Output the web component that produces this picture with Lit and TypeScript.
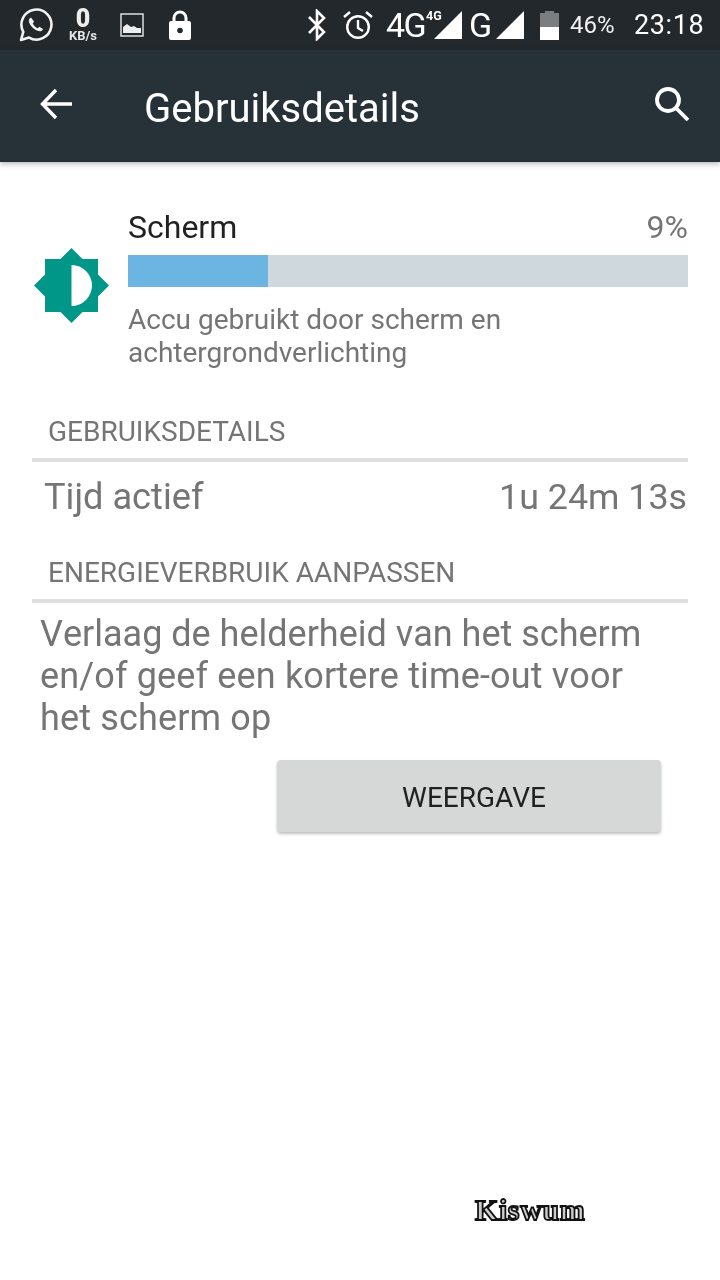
import { LitElement, html, css } from "lit";
import { customElement } from "lit/decorators.js";

@customElement("app-root")
export class AppRoot extends LitElement {
  static styles = css`
    :host { display: block; width: 720px; height: 1280px; background: #fff; font-family: Roboto, "Liberation Sans", sans-serif; overflow: hidden; position: relative; }
    svg { display: block; flex: none; }
    .gray { will-change: transform; }
    .block { display: block; }
    .status { height: 50px; background: #22282c; color: #fff; display: flex; align-items: center; padding: 0 16px 0 19px; box-sizing: border-box; }
    .kb { width: 38px; margin-left: 11px; display: flex; flex-direction: column; align-items: center; font-weight: 700; }
    .kb b { font-size: 25px; line-height: 21px; margin-top: -1px; color: #eee; }
    .kb span { font-size: 13px; line-height: 13px; color: #e6e6e6; }
    .img { margin-left: 18px; }
    .lock { margin-left: 24px; }
    .spacer { flex: 1; }
    .net { font-size: 34px; letter-spacing: -1.5px; line-height: 34px; }
    .sup { font-size: 12.5px; font-weight: 700; align-self: flex-start; margin-top: 8px; width: 18px; }
    .pct { font-size: 24px; margin-left: 11px; color: #f2f2f2; }
    .time { font-size: 27px; margin-left: 19px; letter-spacing: 0.6px; }
    .bar { height: 112px; background: #263238; color: #fff; display: flex; align-items: center; padding: 0 30px 4px 40px; box-sizing: border-box; box-shadow: 0 2px 5px rgba(0,0,0,.28); position: relative; }
    .bar h1 { font-size: 40px; font-weight: 400; margin: 10px 0 0 72px; flex: 1; line-height: 44px; }
    .content { padding: 46px 32px 0; }
    .top { display: flex; align-items: center; }
    .sun { margin: 0 19px 0 2px; position: relative; top: -3px; }
    .info { flex: 1; }
    .head { display: flex; justify-content: space-between; align-items: center; height: 38px; font-size: 32px; color: #212121; }
    .head span:last-child { font-size: 32px; color: #757575; }
    .track { height: 32px; background: #cfd8dc; margin-top: 9px; }
    .fill { height: 100%; background: #6cb5e3; }
    .sub { font-size: 28px; line-height: 33px; color: #757575; margin-top: 16px; }
    .section { font-size: 28px; line-height: 32px; color: #757575; padding: 1px 0 10px 16px; border-bottom: 4px solid #dfdfdf; }
    .s1 { margin-top: 46px; }
    .s2 { margin-top: 37px; }
    .row { display: flex; justify-content: space-between; padding: 0 1px 0 12px; font-size: 36.2px; line-height: 44px; color: #757575; margin-top: 13px; }
    .row span:last-child { font-size: 35.8px; }
    .text { font-size: 36px; line-height: 42px; color: #757575; padding-left: 8px; margin-top: 10px; font-kerning: none; }
    .wide { letter-spacing: 0.15px; }
    .actions { display: flex; justify-content: flex-end; padding-right: 27px; margin-top: 21px; }
    button { all: unset; box-sizing: border-box; width: 384px; height: 72px; background: #d6d7d7; border-radius: 4px; box-shadow: 0 2px 3px rgba(0,0,0,.25); text-align: center; font-size: 28px; line-height: 76px; color: #212121; font-family: inherit; padding-left: 10px; }
    .mark { position: absolute; left: 475px; top: 1194px; font: 700 30px/32px "Liberation Serif", serif; color: #ccc; -webkit-text-stroke: 1.8px #111; letter-spacing: 0.6px; }
  `;

  render() {
    return html`
      <div class="status">
        <svg width="34" height="34" viewBox="0 0 34 34" fill="none">
          <path d="M2 32l2.3-8.2A15 15 0 1 1 10 29.6z" stroke="#f2f2f2" stroke-width="2.6" stroke-linejoin="round"/>
          <path d="M12 9.5c-1.6.7-2.6 2.4-2 4.6 1.2 4 5.4 8 9.5 9 2.2.5 3.8-.5 4.5-2.2l-3.6-2.2-1.7 1.6c-2-.7-4.300-3-5-5l1.500-1.600z" fill="#f2f2f2"/>
        </svg>
        <div class="kb gray"><b>0</b><span>KB/s</span></div>
        <svg class="img" width="24" height="24" viewBox="0 0 24 24">
          <rect x="1" y="1" width="22" height="22" fill="none" stroke="#ddd" stroke-width="1.500"/>
          <path d="M3 20v-6l4-3 4 3 3-1 3 2 4 0v5z" fill="#eee"/>
        </svg>
        <svg class="lock" width="24" height="31" viewBox="0 0 24 31">
          <path d="M6 13V8a6 6 0 0 1 12 0v5" fill="none" stroke="#fff" stroke-width="3"/>
          <rect x="1" y="11" width="22" height="19" rx="2" fill="#fff"/>
          <circle cx="12" cy="20.500" r="2.800" fill="#22282c"/>
        </svg>
        <div class="spacer"></div>
        <svg width="20" height="32" viewBox="0 0 20 32" fill="none" stroke="#fff" stroke-width="2.600">
          <path d="M2 8l15 15-7 7V2l7 7L2 24"/>
        </svg>
        <svg style="margin-left:15px" width="32" height="32" viewBox="0 0 32 32" fill="none" stroke="#fff" stroke-width="2.400">
          <circle cx="16" cy="18" r="10.800"/>
          <path d="M16 11v8l5 3M2 8l6-5M30 8l-6-5"/>
        </svg>
        <span class="net gray" style="margin-left:12px">4G</span>
        <span class="sup gray">4G</span>
        <svg style="margin-left:-10px" width="28" height="28" viewBox="0 0 28 28"><path d="M28 0v28H0z" fill="#fff"/></svg>
        <span class="net gray" style="margin-left:7px">G</span>
        <svg style="margin-left:6px" width="28" height="28" viewBox="0 0 28 28"><path d="M28 0v28H0z" fill="#fff"/></svg>
        <svg style="margin-left:16px" width="19" height="29" viewBox="0 0 19 29">
          <path d="M0 2h5V0h9v2h5v14H0z" fill="#7b7e80"/><rect y="16" width="19" height="13" fill="#fff"/>
        </svg>
        <span class="pct gray">46%</span>
        <span class="time gray">23:18</span>
      </div>
      <div class="bar">
        <svg width="32" height="32" viewBox="0 0 32 32" fill="none" stroke="#fff" stroke-width="3.400">
          <path d="M32 16H3M16 2L2.500 16 16 30"/>
        </svg>
        <h1 class="gray">Gebruiksdetails</h1>
        <svg width="36" height="36" viewBox="0 0 36 36" fill="none" stroke="#fff" stroke-width="3.800">
          <circle cx="14" cy="14" r="11"/><path d="M22 22l12 12"/>
        </svg>
      </div>
      <div class="content">
        <div class="top">
          <svg class="sun" width="75" height="75" viewBox="0 0 75 75">
            <path d="M37.500 0L48.500 11H64V26.500L75 37.500 64 48.500V64H48.500L37.500 75 26.500 64H11V48.500L0 37.500 11 26.500V11H26.500z" fill="#009688"/>
            <path d="M37.500 17a20.500 20.500 0 0 1 0 41z" fill="#fff"/>
          </svg>
          <div class="info">
            <div class="head gray"><span>Scherm</span><span>9%</span></div>
            <div class="track"><div class="fill" style="width:25%"></div></div>
            <div class="sub gray">Accu gebruikt door scherm en<br>achtergrondverlichting</div>
          </div>
        </div>
        <div class="section s1"><span class="gray block">GEBRUIKSDETAILS</span></div>
        <div class="row gray"><span>Tijd actief</span><span>1u 24m 13s</span></div>
        <div class="section s2"><span class="gray block">ENERGIEVERBRUIK AANPASSEN</span></div>
        <div class="text gray">Verlaag de helderheid van het scherm<br><span class="wide">en/of geef een kortere time-out voor</span><br><span class="wide">het scherm op</span></div>
        <div class="actions"><button><span class="gray block">WEERGAVE</span></button></div>
      </div>
      <div class="mark gray">Kiswum</div>
    `;
  }
}
